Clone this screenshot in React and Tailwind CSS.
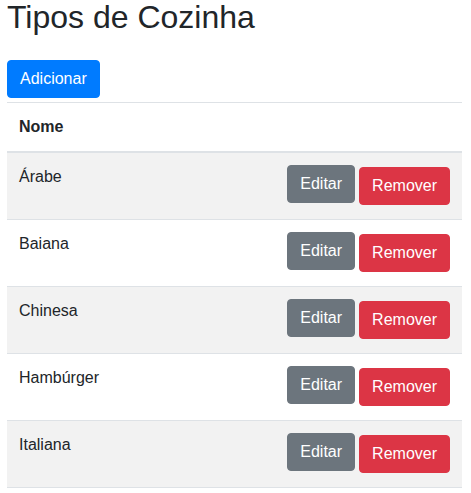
import React from 'react';

const cozinhas = ['Árabe', 'Baiana', 'Chinesa', 'Hambúrger', 'Italiana'];

const App = () => {
    return (
        <div className="px-[7px] text-[#212529] font-['Liberation_Sans',Arial,sans-serif]">
            <h2 className="mt-[-2px] text-[32px] leading-[38px] font-normal">Tipos de Cozinha</h2>

            <button className="mt-[24px] h-[38px] px-3 bg-[#007bff] border border-[#007bff] rounded text-white text-base leading-6">
                Adicionar
            </button>

            {/* Tabela */}
            <div className="mt-[4px] w-[455px] border-t border-[#dee2e6]">
                <div className="p-3 border-b-2 border-[#dee2e6] font-bold text-base leading-6">Nome</div>
                {cozinhas.map((nome, i) => (
                    <div
                        key={nome}
                        className={`flex justify-between items-start p-3 h-[67px] border-b border-[#dee2e6] ${i % 2 === 0 ? 'bg-[#f2f2f2]' : 'bg-white'}`}
                    >
                        <span className="text-base leading-6">{nome}</span>
                        <div className="flex items-start gap-[4px]">
                            <button className="h-[38px] px-3 bg-[#6c757d] border border-[#6c757d] rounded text-white text-base leading-6">
                                Editar
                            </button>
                            <button className="mt-[2px] h-[38px] px-3 bg-[#dc3545] border border-[#dc3545] rounded text-white text-base leading-6">
                                Remover
                            </button>
                        </div>
                    </div>
                ))}
            </div>
        </div>
    );
};

export default App;
